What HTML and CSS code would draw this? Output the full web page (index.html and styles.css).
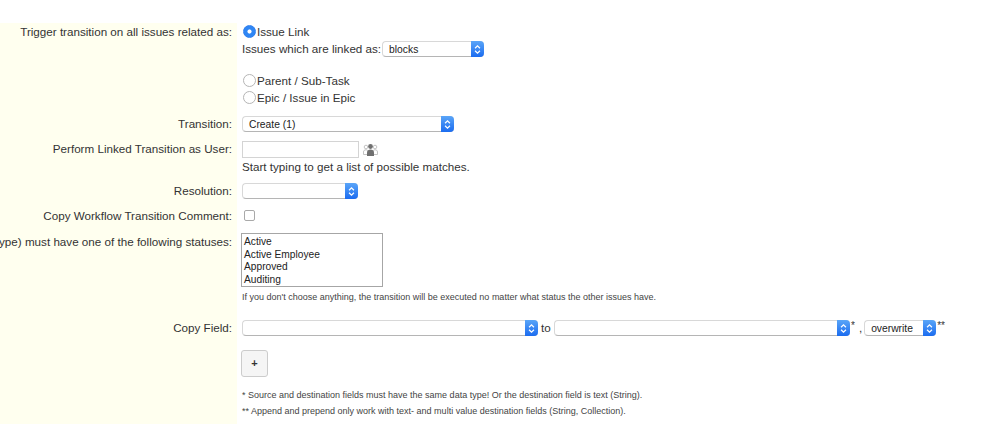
FILE: index.html
```html
<!DOCTYPE html>
<html lang="en">
<head>
<meta charset="utf-8">
<title>Trigger transition</title>
<link rel="stylesheet" href="styles.css">
</head>
<body>
<svg class="defs" width="0" height="0" aria-hidden="true"><symbol id="updown" viewBox="0 0 16 16"><path d="M5 6.5 8 3.5 11 6.5M5 9.5 8 12.5 11 9.5" fill="none" stroke="#fff" stroke-width="1.5"/></symbol></svg>
<main class="form">
  <section class="row row-trigger">
    <div class="label">Trigger transition on all issues related as:</div>
    <div class="value">
      <label class="line"><input class="radio" type="radio" name="rel" checked>Issue Link</label>
      <div class="line">Issues which are linked as:<div class="select sel-blocks"><span class="sel-text">blocks</span><span class="cap"><svg width="16" height="16"><use href="#updown"/></svg></span></div></div>
      <div class="line-gap"></div>
      <label class="line"><input class="radio" type="radio" name="rel">Parent / Sub-Task</label>
      <label class="line"><input class="radio" type="radio" name="rel">Epic / Issue in Epic</label>
    </div>
  </section>
  <section class="row row-transition">
    <div class="label">Transition:</div>
    <div class="value"><div class="select sel-transition"><span class="sel-text">Create (1)</span><span class="cap"><svg width="16" height="16"><use href="#updown"/></svg></span></div></div>
  </section>
  <section class="row row-user">
    <div class="label">Perform Linked Transition as User:</div>
    <div class="value">
      <div class="user-line"><input class="text-input" type="text">
        <svg class="users" width="15" height="14" viewBox="0 0 15 14"><g fill="#fff" stroke="#b5b5b5" stroke-width="0.8"><circle cx="3" cy="4" r="1.800"/><circle cx="12" cy="4" r="1.800"/><path d="M.5 11.500V9C.5 7.500 1.500 6.800 3 6.800S5 7.500 5 9V11.500ZM10 11.500V9C10 7.500 10.500 6.800 12 6.800S14.500 7.500 14.500 9V11.500Z"/></g><g fill="#707070"><circle cx="7.500" cy="3.500" r="2.400"/><path d="M4 13V9.500C4 7.500 5.700 6.500 7.500 6.500S11 7.500 11 9.500V13Z"/></g></svg>
      </div>
      <div class="hint">Start typing to get a list of possible matches.</div>
    </div>
  </section>
  <section class="row row-resolution">
    <div class="label">Resolution:</div>
    <div class="value"><div class="select sel-resolution"><span class="sel-text"></span><span class="cap"><svg width="16" height="16"><use href="#updown"/></svg></span></div></div>
  </section>
  <section class="row row-comment">
    <div class="label">Copy Workflow Transition Comment:</div>
    <div class="value"><input class="check" type="checkbox"></div>
  </section>
  <section class="row row-status">
    <div class="label">ype) must have one of the following statuses:</div>
    <div class="value">
      <ul class="listbox"><li>Active</li><li>Active Employee</li><li>Approved</li><li>Auditing</li></ul>
      <p class="small status-note">If you don't choose anything, the transition will be executed no matter what status the other issues have.</p>
    </div>
  </section>
  <section class="row row-copy">
    <div class="label">Copy Field:</div>
    <div class="value">
      <div class="copy-line">
        <div class="select sel-source"><span class="sel-text"></span><span class="cap"><svg width="16" height="16"><use href="#updown"/></svg></span></div>
        <span class="to">to</span>
        <div class="select sel-dest"><span class="sel-text"></span><span class="cap"><svg width="16" height="16"><use href="#updown"/></svg></span></div>
        <span class="mark">*</span><span class="comma">,</span>
        <div class="select sel-mode"><span class="sel-text">overwrite</span><span class="cap"><svg width="16" height="16"><use href="#updown"/></svg></span></div>
        <span class="mark">**</span>
      </div>
      <button class="add" type="button">+</button>
      <p class="small note-a">* Source and destination fields must have the same data type! Or the destination field is text (String).</p>
      <p class="small note-b">** Append and prepend only work with text- and multi value destination fields (String, Collection).</p>
    </div>
  </section>
</main>
</body>
</html>
```

FILE: styles.css
```css
* { box-sizing: border-box; }
html, body { margin: 0; height: 100%; background: #fff; }
body {
  font-family: "Liberation Sans", Arial, sans-serif;
  font-size: 11.65px;
  line-height: 17px;
  color: #333;
  overflow: hidden;
}
.defs { position: absolute; }
.form { padding-top: 23px; height: 424px; display: flex; flex-direction: column; }
.row { display: flex; flex: none; }
.row-copy { flex: 1; }
.label {
  flex: none;
  width: 237px;
  padding-right: 5px;
  background: #ffffef;
  display: flex;
  justify-content: flex-end;
  white-space: nowrap;
}
.value { padding-left: 5px; min-width: 0; flex: 1; }

.row-trigger { height: 90px; }
.row-transition { height: 25px; }
.row-user { height: 43px; }
.row-resolution { height: 26px; }
.row-comment { height: 25px; }
.row-status { height: 88px; }
.row-transition .label { padding-top: 2px; }
.row-user .label { padding-top: 2px; }
.row-resolution .label { padding-top: 1px; }
.row-status .label { padding-top: 1px; }
.row-copy .label { line-height: 15px; }

.line { display: flex; align-items: center; height: 17px; }
.line-gap { height: 15px; }
.radio {
  appearance: none;
  margin: 0 1px 0 1px;
  width: 13px;
  height: 13px;
  flex: none;
  border-radius: 50%;
  border: 1px solid #b5b5b5;
  background: #fff;
}
.radio:checked {
  border-color: #2f7fee;
  background: radial-gradient(circle, #fff 0 1.7px, #2f86f4 2.4px);
}

.select {
  display: flex;
  height: 16px;
  background: #fff;
  border: 1px solid #d8d8d8;
  border-bottom-color: #b5b5b5;
  border-right: 0;
  border-radius: 4px;
  font-size: 10.3px;
  line-height: 15px;
  color: #222;
  flex: none;
}
.sel-text { flex: 1; padding-left: 6px; }
.cap {
  flex: none;
  width: 13px;
  margin: -1px 0;
  display: flex;
  align-items: center;
  justify-content: center;
  background: linear-gradient(#5aa5f8, #1b6cf0);
  border-radius: 0 4px 4px 0;
}
.cap svg { width: 13px; height: 13px; }
.sel-blocks { width: 102px; margin-left: 1px; margin-top: 1px; }
.sel-transition { width: 212px; margin-top: 3px; }
.sel-resolution { width: 116px; margin-top: 2px; }

.user-line { display: flex; align-items: center; height: 17px; margin-top: 3px; }
.text-input {
  width: 117px;
  height: 17px;
  margin: 0;
  padding: 0;
  border: 1px solid #d4d4d4;
  background: #fff;
}
.users { margin-left: 4px; }

.check {
  appearance: none;
  display: block;
  margin: 3px 0 0 2px;
  width: 11px;
  height: 11px;
  border: 1px solid #a9a9a9;
  border-radius: 2px;
  background: #fff;
}
.listbox {
  list-style: none;
  margin: 1px 0 0 -1px;
  padding: 2px 2px 0;
  width: 142px;
  height: 54px;
  border: 1px solid #a6a6a6;
  background: #fff;
  font-size: 10.2px;
  line-height: 12.7px;
  color: #222;
  overflow: hidden;
}
.small { font-size: 9px; line-height: 12px; margin: 0; color: #444; white-space: nowrap; }
.status-note { margin-top: 4px; }

.copy-line { display: flex; align-items: flex-start; height: 16px; line-height: 16px; }
.sel-source { width: 296px; }
.to { margin: 0 3px; width: 10px; }
.sel-dest { width: 296px; }
.mark { font-size: 10px; line-height: 12px; padding-left: 1px; }
.comma { margin: 0 2px 0 4px; }
.sel-mode { width: 72px; }
.add {
  display: block;
  margin: 14px 0 0 -1px;
  width: 27px;
  height: 27px;
  padding: 0;
  background: #f5f5f5;
  border: 1px solid #ccc;
  border-radius: 3px;
  font: 700 11px/1 "Liberation Sans", Arial, sans-serif;
  color: #333;
}
.note-a { margin-top: 12px; }
.note-b { margin-top: 4px; }
```
